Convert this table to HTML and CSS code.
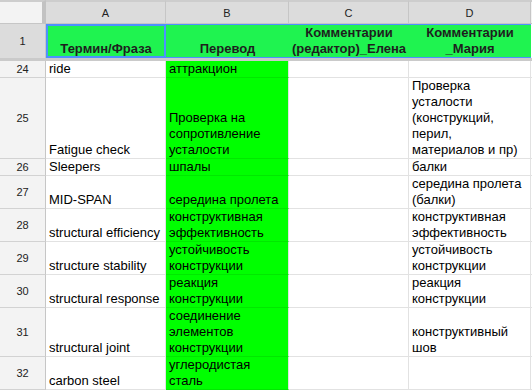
FILE: index.html
```html
<!DOCTYPE html>
<html lang="ru">
<head>
<meta charset="utf-8">
<title>Sheet</title>
<link rel="stylesheet" href="styles.css">
</head>
<body>
<div class="sheet">
  <div class="corner"></div>
  <div class="colhead">A</div>
  <div class="colhead">B</div>
  <div class="colhead">C</div>
  <div class="colhead">D</div>
  <div class="colhead rest"></div>

  <div class="num sel">1</div>
  <div class="hcell active">Термин/Фраза</div>
  <div class="hcell">Перевод</div>
  <div class="hcell">Комментарии<br>(редактор)_Елена</div>
  <div class="hcell">Комментарии<br>_Мария</div>
  <div class="cell rest1"></div>

  <div class="freeze"></div>

  <div class="num">24</div>
  <div class="cell">ride</div>
  <div class="cell tr">аттракцион</div>
  <div class="cell"></div>
  <div class="cell"></div>
  <div class="cell"></div>

  <div class="num">25</div>
  <div class="cell">Fatigue check</div>
  <div class="cell tr">Проверка на<br>сопротивление<br>усталости</div>
  <div class="cell"></div>
  <div class="cell">Проверка<br>усталости<br>(конструкций,<br>перил,<br>материалов и пр)</div>
  <div class="cell"></div>

  <div class="num">26</div>
  <div class="cell">Sleepers</div>
  <div class="cell tr">шпалы</div>
  <div class="cell"></div>
  <div class="cell">балки</div>
  <div class="cell"></div>

  <div class="num">27</div>
  <div class="cell">MID-SPAN</div>
  <div class="cell tr">середина пролета</div>
  <div class="cell"></div>
  <div class="cell">середина пролета<br>(балки)</div>
  <div class="cell"></div>

  <div class="num">28</div>
  <div class="cell">structural efficiency</div>
  <div class="cell tr">конструктивная<br>эффективность</div>
  <div class="cell"></div>
  <div class="cell">конструктивная<br>эффективность</div>
  <div class="cell"></div>

  <div class="num">29</div>
  <div class="cell">structure stability</div>
  <div class="cell tr">устойчивость<br>конструкции</div>
  <div class="cell"></div>
  <div class="cell">устойчивость<br>конструкции</div>
  <div class="cell"></div>

  <div class="num">30</div>
  <div class="cell">structural response</div>
  <div class="cell tr">реакция<br>конструкции</div>
  <div class="cell"></div>
  <div class="cell">реакция<br>конструкции</div>
  <div class="cell"></div>

  <div class="num">31</div>
  <div class="cell">structural joint</div>
  <div class="cell tr">соединение<br>элементов<br>конструкции</div>
  <div class="cell"></div>
  <div class="cell">конструктивный<br>шов</div>
  <div class="cell"></div>

  <div class="num">32</div>
  <div class="cell">carbon steel</div>
  <div class="cell tr">углеродистая<br>сталь</div>
  <div class="cell"></div>
  <div class="cell"></div>
  <div class="cell"></div>
</div>
</body>
</html>
```

FILE: styles.css
```css
html, body {
  margin: 0;
  padding: 0;
  background: #ffffff;
}

body {
  font-family: "Liberation Sans", Arial, Helvetica, sans-serif;
  color: #000;
}

.sheet {
  display: grid;
  grid-template-columns: 46px 120px 123px 120px 122px 1fr;
}

.corner {
  height: 24px;
  box-sizing: border-box;
  background: #f3f3f3;
  border-top: 2px solid #cdcdcd;
  border-bottom: 1px solid #c6c6c6;
  border-right: 4px solid #c2c2c2;
}

.colhead {
  height: 24px;
  box-sizing: border-box;
  background: #dcdcdc;
  border-top: 2px solid #cdcdcd;
  border-bottom: 1px solid #c6c6c6;
  border-right: 1px solid #c6c6c6;
  display: flex;
  align-items: center;
  justify-content: center;
  font-size: 11px;
  color: #222;
}

.colhead.rest {
  background: #f3f3f3;
  border-right: none;
}

.num {
  background: #f3f3f3;
  border-right: 1px solid #c6c6c6;
  border-bottom: 1px solid #d2d2d2;
  display: flex;
  align-items: center;
  justify-content: center;
  font-size: 11px;
  color: #222;
}

.num.sel {
  background: #dcdcdc;
  border-bottom: none;
}

.hcell {
  background: #1ff350;
  border-top: 1px solid #4d90fe;
  border-bottom: 1px solid #4d90fe;
  display: flex;
  flex-direction: column;
  justify-content: flex-end;
  align-items: center;
  text-align: center;
  font-size: 13px;
  line-height: 16px;
  font-weight: bold;
  color: #1e1e1e;
  white-space: nowrap;
  overflow: hidden;
}

.hcell.active {
  border: 1px solid #4d90fe;
  box-shadow: inset 0 0 0 1px #4d90fe;
}

.freeze {
  grid-column: 1 / -1;
  height: 3px;
  background: #cacaca;
}

.cell {
  border-right: 1px solid #e2e2e2;
  border-bottom: 1px solid #e2e2e2;
  padding: 0 3px;
  font-size: 13px;
  line-height: 16px;
  display: flex;
  flex-direction: column;
  justify-content: flex-end;
  white-space: nowrap;
  overflow: hidden;
}

.cell.rest1 {
  border-bottom: none;
  border-right: none;
}

.cell.tr {
  background: #00ff00;
  border-bottom-color: #00e800;
}
```
